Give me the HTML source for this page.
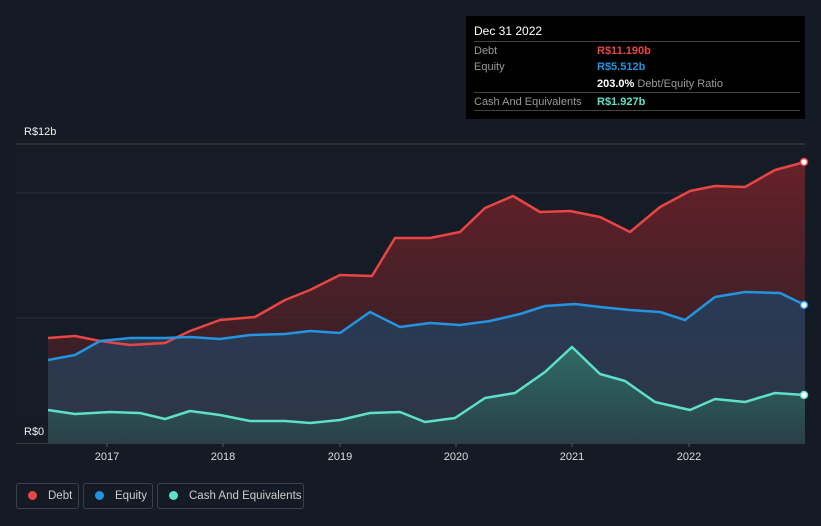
<!DOCTYPE html><html><head><style>
body{margin:0;width:821px;height:526px;background:#151b25;font-family:"Liberation Sans",sans-serif;overflow:hidden;position:relative}
.tip{position:absolute;left:466px;top:16px;width:339px;height:103px;background:#000;color:#fff;font-size:11px}
.row{position:absolute;left:8px;width:326px;border-top:1px solid #444;height:18px;line-height:18px}
.row span:first-child{color:#999;position:absolute;left:0}
.row span:last-child{position:absolute;left:123px;font-weight:bold}
.leg{position:absolute;top:483px;height:26px;border:1px solid #3a404a;border-radius:3px;color:#ccc;font-size:11.5px;line-height:24px;box-sizing:border-box;white-space:nowrap;overflow:hidden}
.leg i{display:inline-block;width:9px;height:9px;border-radius:50%;margin:0 11px 0 11px;vertical-align:-1px}
</style></head><body>
<svg width="821" height="526" style="position:absolute;left:0;top:0">
<rect x="16" y="144" width="789" height="299" fill="#161c26"/>
<line x1="16" y1="144" x2="805" y2="144" stroke="#444" />
<line x1="16" y1="193" x2="805" y2="193" stroke="#2a303a"/>
<line x1="16" y1="318" x2="805" y2="318" stroke="#2a303a"/>
<line x1="16" y1="443" x2="805" y2="443" stroke="#555"/>
<defs>
<linearGradient id="gd" x1="0" y1="0" x2="0" y2="1"><stop offset="0" stop-color="#7a2228" stop-opacity=".8"/><stop offset="1" stop-color="#3a2028" stop-opacity=".6"/></linearGradient>
<linearGradient id="ge" x1="0" y1="0" x2="0" y2="1"><stop offset="0" stop-color="#2a3a56"/><stop offset="1" stop-color="#2c3645"/></linearGradient>
<linearGradient id="gc" x1="0" y1="0" x2="0" y2="1"><stop offset="0" stop-color="#2e6b66"/><stop offset="1" stop-color="#2a4048"/></linearGradient>
</defs>
<polygon fill="url(#gd)" points="48,443 48,338 75,336 100,341 130,345 165,343 190,331 220,320 255,317 285,300 310,290 340,275 372,276 395,238 430,238 460,232 485,208 513,196 540,212 570,211 600,217 630,232 660,207 690,191 715,186 745,187 775,170 805,162 805,443"/>
<polygon fill="url(#ge)" points="48,443 48,360 75,355 100,341 130,338 165,338 190,337 220,339 250,335 285,334 310,331 340,333 370,312 400,327 430,323 460,325 490,321 520,314 545,306 575,304 600,307 630,310 660,312 685,320 715,297 745,292 780,293 805,305 805,443"/>
<polygon fill="url(#gc)" points="48,443 48,410 75,414 110,412 140,413 165,419 190,411 220,415 250,421 285,421 310,423 340,420 370,413 400,412 425,422 455,418 485,398 515,393 545,372 572,347 600,374 625,381 655,402 690,410 715,399 745,402 775,393 805,395 805,443"/>
<g fill="none" stroke-width="2.5" stroke-linejoin="round">
<polyline stroke="#e84545" points="48,338 75,336 100,341 130,345 165,343 190,331 220,320 255,317 285,300 310,290 340,275 372,276 395,238 430,238 460,232 485,208 513,196 540,212 570,211 600,217 630,232 660,207 690,191 715,186 745,187 775,170 805,162"/>
<polyline stroke="#2394e0" points="48,360 75,355 100,341 130,338 165,338 190,337 220,339 250,335 285,334 310,331 340,333 370,312 400,327 430,323 460,325 490,321 520,314 545,306 575,304 600,307 630,310 660,312 685,320 715,297 745,292 780,293 805,305"/>
<polyline stroke="#5ee0c8" points="48,410 75,414 110,412 140,413 165,419 190,411 220,415 250,421 285,421 310,423 340,420 370,413 400,412 425,422 455,418 485,398 515,393 545,372 572,347 600,374 625,381 655,402 690,410 715,399 745,402 775,393 805,395"/>
</g>
<circle cx="804" cy="162" r="3.5" fill="#fff" stroke="#e84545" stroke-width="1.5"/>
<circle cx="804" cy="305" r="3.5" fill="#fff" stroke="#2394e0" stroke-width="1.5"/>
<circle cx="804" cy="395" r="3.5" fill="#fff" stroke="#5ee0c8" stroke-width="1.5"/>
<g stroke="#555"><line x1="107" y1="443" x2="107" y2="447"/><line x1="223" y1="443" x2="223" y2="447"/><line x1="340" y1="443" x2="340" y2="447"/><line x1="456" y1="443" x2="456" y2="447"/><line x1="572" y1="443" x2="572" y2="447"/><line x1="689" y1="443" x2="689" y2="447"/></g>
<g fill="#ddd" font-size="11" text-anchor="middle" font-family="Liberation Sans"><text x="107" y="460">2017</text><text x="223" y="460">2018</text><text x="340" y="460">2019</text><text x="456" y="460">2020</text><text x="572" y="460">2021</text><text x="689" y="460">2022</text></g>
<rect x="16" y="420" width="32" height="23" fill="#151b25"/>
<text x="24" y="435" fill="#eee" font-size="11">R$0</text>
<text x="24" y="135" fill="#eee" font-size="11">R$12b</text>
</svg>
<div class="tip">
<div style="position:absolute;left:8px;top:8px;font-size:12px">Dec 31 2022</div>
<div class="row" style="top:25px"><span>Debt</span><span style="color:#e84545">R$11.190b</span></div>
<div class="row" style="top:42px;border:0"><span>Equity</span><span style="color:#2394e0">R$5.512b</span></div>
<div class="row" style="top:59px;border:0"><span></span><span style="color:#fff">203.0% <b style="color:#999;font-weight:normal">Debt/Equity Ratio</b></span></div>
<div class="row" style="top:76px"><span>Cash And Equivalents</span><span style="color:#5ee0c8">R$1.927b</span></div>
<div class="row" style="top:94px;height:0"></div>
</div>
<div class="leg" style="left:16px;width:63px"><i style="background:#e84545"></i>Debt</div>
<div class="leg" style="left:83px;width:70px"><i style="background:#2394e0"></i>Equity</div>
<div class="leg" style="left:157px;width:147px"><i style="background:#5ee0c8"></i>Cash And Equivalents</div>
</body></html>
